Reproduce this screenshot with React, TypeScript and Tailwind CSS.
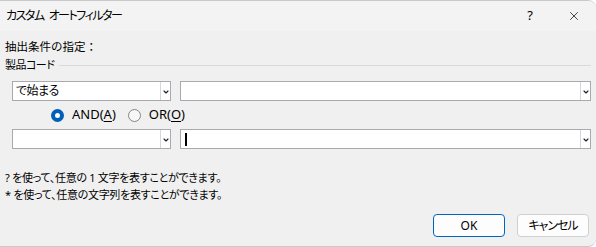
import { X, ChevronDown } from 'lucide-react';

const jp = "font-['Noto_Sans','Noto_Sans_CJK_JP',sans-serif]";

function Combo({ width, text, caret }: { width: string; text?: string; caret?: boolean }) {
  return (
    <div className={`${width} h-[20px] flex border border-[#a9a9b0] bg-white`}>
      <div className="flex-1 flex items-center pl-[3px] text-[12px] leading-none text-black [font-feature-settings:'palt'] tracking-[-0.5px]">
        {caret && <span className="w-[1.5px] h-[13px] bg-black ml-[1px]" />}
        {text}
      </div>
      <div className="w-[10px] flex items-center justify-center border-l border-[#d7d7d7]">
        <ChevronDown size={8} strokeWidth={3.5} className="text-[#222] mt-[1px]" />
      </div>
    </div>
  );
}

function Radio({ checked, label, hot }: { checked?: boolean; label: string; hot: string }) {
  const i = label.indexOf('(');
  return (
    <div className="flex items-center gap-[8px]">
      {checked ? (
        <div className="w-[13px] h-[13px] rounded-full bg-[#005fb8] flex items-center justify-center">
          <div className="w-[5px] h-[5px] rounded-full bg-white" />
        </div>
      ) : (
        <div className="w-[13px] h-[13px] rounded-full border border-[#858585] bg-[#f7f7f7]" />
      )}
      <span className="text-[13px] text-black">
        {label.slice(0, i + 1)}
        <span className="underline underline-offset-2">{hot}</span>)
      </span>
    </div>
  );
}

export default function App() {
  return (
    <div className={`w-[596px] h-[247px] bg-[#f0f0f0] border-t border-b border-[#c9c9c9] rounded-tr-[8px] rounded-br-[8px] overflow-hidden flex flex-col ${jp} text-black`}>
      {/* タイトルバー */}
      <div className="h-[30px] bg-[#f3f3f3] flex items-center pl-[6px] shrink-0">
        <span className="text-[12px] flex-1 [font-feature-settings:'palt'] tracking-[-1.5px]">
          カスタム<span className="ml-[5px]">オートフィルター</span>
        </span>
        <span className="text-[13px] w-[20px] text-center mr-[27px]">?</span>
        <X size={14} strokeWidth={1.3} className="mr-[15px] text-[#111]" />
      </div>

      <div className="flex flex-col pl-[5px] pr-[5px]">
        <div className="mt-[8px] h-[16px] leading-[16px] text-[11.5px]">抽出条件の指定：</div>
        <div className="mt-[2px] h-[16px] flex items-center">
          <span className="text-[11px] leading-[16px] [font-feature-settings:'palt'] tracking-[-0.5px]">製品コード</span>
          <div className="flex-1 h-px bg-[#d9d9d9] ml-[4px]" />
        </div>

        <div className="mt-[8px] flex gap-[9px] pl-[7px]">
          <Combo width="w-[159px]" text="で始まる" />
          <Combo width="w-[411px]" />
        </div>

        <div className="h-[28px] flex items-center gap-[12px] pl-[46px]">
          <Radio checked label="AND(A)" hot="A" />
          <Radio label="OR(O)" hot="O" />
        </div>

        <div className="flex gap-[9px] pl-[7px]">
          <Combo width="w-[159px]" />
          <Combo width="w-[411px]" caret />
        </div>

        <div className="mt-[20px] text-[11px] leading-[17px] [font-feature-settings:'palt'] tracking-[-0.3px]">
          <div>? を使って、任意の 1 文字を表すことができます。</div>
          <div>* を使って、任意の文字列を表すことができます。</div>
        </div>

        <div className="mt-[11px] flex justify-end gap-[12px] pr-[2px]">
          <button className="w-[72px] h-[23px] rounded-[4px] border border-[#0067c0] bg-[#fdfdfd] text-[12px]">OK</button>
          <button className="w-[72px] h-[23px] rounded-[4px] border border-[#d0d0d0] bg-[#fdfdfd] text-[12px] [font-feature-settings:'palt'] tracking-[-1px]">キャンセル</button>
        </div>
      </div>
    </div>
  );
}
